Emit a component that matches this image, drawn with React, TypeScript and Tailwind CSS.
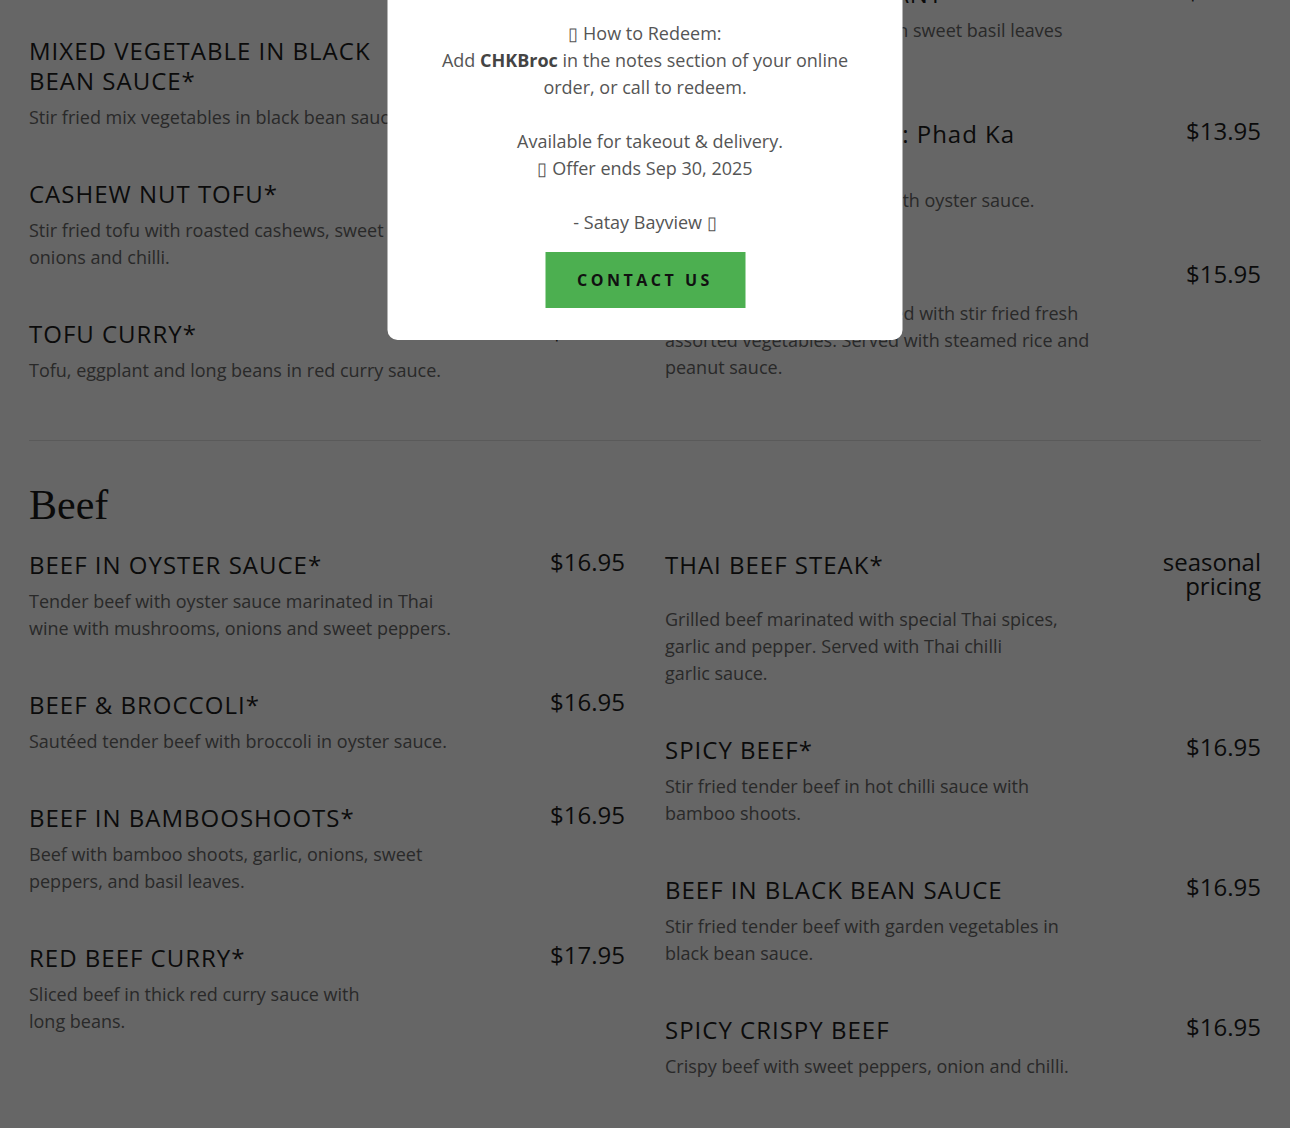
import React from 'react';

type MenuItem = {
  name: string[];
  price: string[];
  desc: string[];
};

const TOFU_LEFT: MenuItem[] = [
  {
    name: ['GREEN CURRY WITH', 'TOFU*'],
    price: ['$15.95'],
    desc: ['Tofu, bamboo shoots, eggplant and sweet basil', 'in green curry sauce with coconut', 'milk.'],
  },
  {
    name: ['MIXED VEGETABLE IN BLACK', 'BEAN SAUCE*'],
    price: ['$13.95'],
    desc: ['Stir fried mix vegetables in black bean sauce.'],
  },
  {
    name: ['CASHEW NUT TOFU*'],
    price: ['$14.95'],
    desc: ['Stir fried tofu with roasted cashews, sweet', 'onions and chilli.'],
  },
  {
    name: ['TOFU CURRY*'],
    price: ['$15.95'],
    desc: ['Tofu, eggplant and long beans in red curry sauce.'],
  },
];

const TOFU_RIGHT: MenuItem[] = [
  {
    name: ['TOFU WITH GINGER*'],
    price: ['$13.95'],
    desc: ['Stir fried tofu with fresh ginger, onions,', 'mushrooms and bell peppers.'],
  },
  {
    name: ['BASIL TOFU EGGPLANT'],
    price: ['$14.95'],
    desc: ['Sautéed eggplant & tofu with sweet basil leaves', 'and chilli.'],
  },
  {
    name: ['CRISPY ASIAN TOFU: Phad Ka', 'Prao*'],
    price: ['$13.95'],
    desc: ['Stir fried tofu and veggies with oyster sauce.'],
  },
  {
    name: ['PRA RAM TOFU*'],
    price: ['$15.95'],
    desc: ['Crispy fried tofu cubes served with stir fried fresh', 'assorted vegetables. Served with steamed rice and', 'peanut sauce.'],
  },
];

const BEEF_LEFT: MenuItem[] = [
  {
    name: ['BEEF IN OYSTER SAUCE*'],
    price: ['$16.95'],
    desc: ['Tender beef with oyster sauce marinated in Thai', 'wine with mushrooms, onions and sweet peppers.'],
  },
  {
    name: ['BEEF & BROCCOLI*'],
    price: ['$16.95'],
    desc: ['Sautéed tender beef with broccoli in oyster sauce.'],
  },
  {
    name: ['BEEF IN BAMBOOSHOOTS*'],
    price: ['$16.95'],
    desc: ['Beef with bamboo shoots, garlic, onions, sweet', 'peppers, and basil leaves.'],
  },
  {
    name: ['RED BEEF CURRY*'],
    price: ['$17.95'],
    desc: ['Sliced beef in thick red curry sauce with', 'long beans.'],
  },
];

const BEEF_RIGHT: MenuItem[] = [
  {
    name: ['THAI BEEF STEAK*'],
    price: ['seasonal', 'pricing'],
    desc: ['Grilled beef marinated with special Thai spices,', 'garlic and pepper. Served with Thai chilli', 'garlic sauce.'],
  },
  {
    name: ['SPICY BEEF*'],
    price: ['$16.95'],
    desc: ['Stir fried tender beef in hot chilli sauce with', 'bamboo shoots.'],
  },
  {
    name: ['BEEF IN BLACK BEAN SAUCE'],
    price: ['$16.95'],
    desc: ['Stir fried tender beef with garden vegetables in', 'black bean sauce.'],
  },
  {
    name: ['SPICY CRISPY BEEF'],
    price: ['$16.95'],
    desc: ['Crispy beef with sweet peppers, onion and chilli.'],
  },
];

const Lines: React.FC<{ lines: string[] }> = ({ lines }) => (
  <>
    {lines.map((l, i) => (
      <React.Fragment key={i}>
        {i > 0 && <br />}
        {l}
      </React.Fragment>
    ))}
  </>
);

const Item: React.FC<{ item: MenuItem }> = ({ item }) => (
  <div>
    <div className="flex items-start justify-between gap-6">
      <h3 className="text-[24px] leading-[30px] tracking-[1px] text-[#1c1c1c] font-normal">
        <Lines lines={item.name} />
      </h3>
      <div className="text-[24px] leading-[24px] text-right text-[#1c1c1c] whitespace-nowrap">
        <Lines lines={item.price} />
      </div>
    </div>
    <p className="mt-2 text-[18px] leading-[27px] text-[#676767]">
      <Lines lines={item.desc} />
    </p>
  </div>
);

const Section: React.FC<{ title: string; left: MenuItem[]; right: MenuItem[] }> = ({ title, left, right }) => (
  <section className="mx-[29px] pt-[40px] pb-[56px] border-b border-[#e2e2e2]">
    <h2 className="font-['Liberation_Serif',serif] text-[42px] leading-[48px] text-[#1a1a1a] mb-[21px]">{title}</h2>
    <div className="grid grid-cols-2 gap-x-[40px] items-start">
      <div className="flex flex-col gap-[48px]">
        {left.map((it, i) => (
          <Item key={i} item={it} />
        ))}
      </div>
      <div className="flex flex-col gap-[48px]">
        {right.map((it, i) => (
          <Item key={i} item={it} />
        ))}
      </div>
    </div>
  </section>
);

export default function App() {
  return (
    <div className="relative h-[1128px] w-[1290px] overflow-hidden bg-white font-['Open_Sans',sans-serif]">
      {/* page scrolled into the menu */}
      <div className="-mt-[270px]">
        <Section title="Tofu" left={TOFU_LEFT} right={TOFU_RIGHT} />
        <Section title="Beef" left={BEEF_LEFT} right={BEEF_RIGHT} />
      </div>

      {/* dim overlay */}
      <div className="absolute inset-0 bg-black/60" />

      {/* promo popup */}
      <div className="absolute top-0 left-1/2 -translate-x-1/2 w-[515px] bg-white rounded-b-[10px] pt-[20px] pb-[32px] flex flex-col items-center">
        <p className="text-[18px] leading-[27px] text-[#555555] text-center">
          ▯ How to Redeem:
          <br />
          Add <strong className="font-bold text-[#444444]">CHKBroc</strong> in the notes section of your online
          <br />
          order, or call to redeem.
          <br />
          <br />
          <span className="pl-[10px]">Available for takeout &amp; delivery.</span>
          <br />
          ▯ Offer ends Sep 30, 2025
          <br />
          <br />
          - Satay Bayview ▯
        </p>
        <button className="mt-[16px] w-[200px] h-[56px] bg-[#4caf50] text-[#111111] text-[16px] font-bold tracking-[3.5px] uppercase">
          Contact Us
        </button>
      </div>
    </div>
  );
}
